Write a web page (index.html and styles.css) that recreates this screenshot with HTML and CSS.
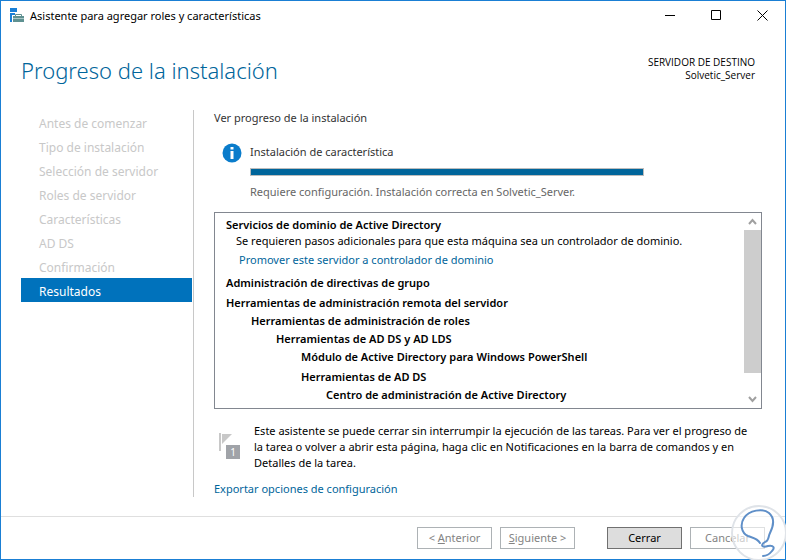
FILE: index.html
```html
<!DOCTYPE html>
<html lang="es">
<head>
<meta charset="utf-8">
<title>Asistente para agregar roles y características</title>
<link rel="stylesheet" href="styles.css">
</head>
<body>
<div class="window">
  <header class="titlebar">
    <svg class="app-icon" width="16" height="16" viewBox="0 0 16 16" aria-hidden="true">
      <path d="M1 0h7v4H1z" fill="#1a7fd6"/>
      <path d="M1 5h5v2H3v7H1z" fill="#1a7fd6"/>
      <path d="M6.500 8V6.500h6V8" fill="none" stroke="#5f9191"/>
      <path d="M4 8h11v2H4zM4 11h11v3H4z" fill="#5f9191"/>
      <path d="M4 10h11v1H4z" fill="#a8c6c6"/>
    </svg>
    <span class="titlebar-text">Asistente para agregar roles y características</span>
    <div class="window-controls">
      <button class="window-button" type="button" aria-label="Minimizar"><svg width="11" height="11" viewBox="0 0 11 11"><path d="M0 5.5h10"/></svg></button>
      <button class="window-button" type="button" aria-label="Maximizar"><svg width="11" height="11" viewBox="0 0 11 11"><path d="M.5.5h9v9h-9z"/></svg></button>
      <button class="window-button" type="button" aria-label="Cerrar ventana"><svg width="11" height="11" viewBox="0 0 11 11"><path d="M.5.5l10 10M10.500.5l-10 10"/></svg></button>
    </div>
  </header>

  <div class="page-header">
    <h1>Progreso de la instalación</h1>
    <p class="destination">SERVIDOR DE DESTINO<br>Solvetic_Server</p>
  </div>

  <div class="page-body">
    <nav class="steps" aria-label="Pasos">
      <ol>
        <li>Antes de comenzar</li>
        <li>Tipo de instalación</li>
        <li>Selección de servidor</li>
        <li>Roles de servidor</li>
        <li>Características</li>
        <li>AD DS</li>
        <li>Confirmación</li>
        <li class="current" aria-current="step">Resultados</li>
      </ol>
    </nav>

    <main class="content">
      <h2>Ver progreso de la instalación</h2>

      <section class="status">
        <svg class="info-icon" width="20" height="20" viewBox="0 0 20 20" aria-hidden="true">
          <circle cx="10" cy="10" r="9.500" fill="#0a7ccb"/>
          <path d="M8.500 4h3v2.500h-3zM8.500 8h3v8h-3z" fill="#fff"/>
        </svg>
        <div class="status-detail">
          <label for="install-progress">Instalación de característica</label>
          <progress id="install-progress" value="100" max="100"></progress>
          <p>Requiere configuración. Instalación correcta en Solvetic_Server.</p>
        </div>
      </section>

      <section class="results">
        <div class="results-list">
          <div class="feature">
            <h3>Servicios de dominio de Active Directory</h3>
            <p>Se requieren pasos adicionales para que esta máquina sea un controlador de dominio.</p>
            <a href="#promover">Promover este servidor a controlador de dominio</a>
          </div>
          <h3>Administración de directivas de grupo</h3>
          <ul class="tree">
            <li>Herramientas de administración remota del servidor
              <ul>
                <li>Herramientas de administración de roles
                  <ul>
                    <li>Herramientas de AD DS y AD LDS
                      <ul>
                        <li>Módulo de Active Directory para Windows PowerShell</li>
                        <li>Herramientas de AD DS
                          <ul>
                            <li>Centro de administración de Active Directory</li>
                          </ul>
                        </li>
                      </ul>
                    </li>
                  </ul>
                </li>
              </ul>
            </li>
          </ul>
        </div>
        <div class="scrollbar" aria-hidden="true">
          <svg width="17" height="17" viewBox="0 0 17 17"><path d="M5 11l3.500-4 3.500 4"/></svg>
          <div class="scroll-track"><div class="scroll-thumb"></div></div>
          <svg width="17" height="17" viewBox="0 0 17 17"><path d="M5 6l3.500 4L12 6"/></svg>
        </div>
      </section>

      <section class="notice">
        <div class="flag">
          <svg width="14" height="20" viewBox="0 0 14 20" aria-hidden="true">
            <path d="M0 0h2v18H0z" fill="#c8c8c8"/><path d="M3 1h10L3 11z" fill="#c8c8c8"/>
          </svg>
          <span class="flag-count">1</span>
        </div>
        <p>Este asistente se puede cerrar sin interrumpir la ejecución de las tareas. Para ver el progreso de la tarea o volver a abrir esta página, haga clic en Notificaciones en la barra de comandos y en Detalles de la tarea.</p>
      </section>

      <a class="export" href="#exportar">Exportar opciones de configuración</a>
    </main>
  </div>

  <footer class="actions">
    <div class="button-pair">
      <button type="button" disabled>&lt; <u>A</u>nterior</button>
      <button type="button" disabled><u>S</u>iguiente &gt;</button>
    </div>
    <div class="button-pair">
      <button class="primary" type="button">Cerrar</button>
      <button type="button" disabled>Cancelar</button>
    </div>
  </footer>

  <svg class="watermark" width="60" height="60" viewBox="0 0 60 60" aria-hidden="true">
    <circle cx="33" cy="33" r="27" fill="#fff" fill-opacity=".6" stroke="#dfe3e8" stroke-width="2"/>
    <path d="M34 43C31 38 27 38 22 36C15 33 14 24 18 18C23 10 37 8 43 13C50 19 47 27 44 33C42 37 43 41 39 42C34 45 36 48 42 46C48 45 49 48 46 51Q42 56 37 56" fill="none" stroke="#5f8fc8" stroke-width="2" stroke-linecap="round" stroke-linejoin="round"/>
  </svg>
</div>
</body>
</html>
```
FILE: styles.css
```css
* {
  box-sizing: border-box;
}

body,
h1,
h2,
h3,
p,
ul,
ol {
  margin: 0;
  padding: 0;
}

body {
  background: #fff;
  color: #000;
  font: 11px/16px "Noto Sans", "Open Sans", sans-serif;
}

ul,
ol {
  list-style: none;
}

button {
  font: inherit;
}

a {
  color: #00659b;
  text-decoration: none;
}

.window {
  position: relative;
  display: flex;
  flex-direction: column;
  min-height: 100vh;
  border: 1px solid #1a7fd4;
}

.titlebar {
  display: flex;
  align-items: center;
  height: 29px;
  padding-left: 8px;
}

.titlebar-text {
  flex: 1;
  padding-left: 5px;
}

.window-controls {
  display: flex;
}

.window-button {
  display: flex;
  align-items: center;
  justify-content: center;
  width: 46px;
  height: 29px;
  padding: 0;
  border: 0;
  background: none;
}

.window-button path {
  fill: none;
  stroke: #000;
}

.page-header {
  display: flex;
  justify-content: space-between;
  padding: 24px 30px 24px 20px;
}

h1 {
  color: #00659b;
  font-size: 22px;
  font-weight: 300;
  line-height: 32px;
}

.destination {
  padding-top: 2px;
  font-family: "Open Sans", sans-serif;
  font-size: 10px;
  line-height: 13px;
  text-align: right;
}

.page-body {
  display: flex;
  flex: 1;
  padding: 0 23px 19px 20px;
}

.steps {
  flex: 0 0 173px;
  border-right: 1px solid #c8c8c8;
}

.steps li {
  margin-right: 1px;
  padding: 4px 0 0 18px;
  color: #c8c8c8;
  font-size: 12px;
  line-height: 20px;
}

.steps .current {
  background: #0072bc;
  color: #fff;
}

.content {
  flex: 1;
  min-width: 0;
  padding-left: 20px;
}

h2 {
  color: #333;
  font-size: 11px;
  font-weight: 400;
}

.status {
  display: flex;
  gap: 8px;
  padding: 17px 0 12px 8px;
}

.status-detail {
  display: flex;
  flex: 1;
  flex-direction: column;
  gap: 8px;
  padding-top: 1px;
  color: #333;
}

.status-detail p {
  color: #666;
}

progress {
  appearance: none;
  width: 77%;
  height: 8px;
  border: 1px solid #bcbcbc;
  background: #e6e6e6;
}

progress::-webkit-progress-bar {
  background: #e6e6e6;
}

progress::-webkit-progress-value {
  background: #00659b;
}

.results {
  display: flex;
  border: 1px solid #828790;
}

.results-list {
  flex: 1;
  padding: 4px 0 5px 11px;
}

.results h3,
.tree {
  font-size: 11px;
  font-weight: 600;
}

.feature {
  padding-bottom: 7px;
}

.feature p {
  padding-left: 10px;
}

.feature a {
  display: block;
  padding: 3px 0 0 13px;
}

.tree {
  padding-top: 4px;
}

.tree ul {
  padding: 2px 0 0 25px;
}

.tree li + li {
  padding-top: 4px;
}

.scrollbar {
  display: flex;
  flex-direction: column;
  width: 17px;
}

.scrollbar path {
  fill: none;
  stroke: #a0a0a0;
  stroke-width: 2;
}

.scroll-track {
  flex: 1;
}

.scroll-thumb {
  height: 89%;
  background: #cdcdcd;
}

.notice {
  display: flex;
  gap: 14px;
  padding: 14px 5px 10px;
}

.flag {
  position: relative;
  flex: 0 0 21px;
  padding-top: 10px;
}

.flag-count {
  position: absolute;
  top: 22px;
  right: 0;
  width: 14px;
  background: #a0a3a8;
  color: #fff;
  font-size: 10px;
  line-height: 14px;
  text-align: center;
}

.export {
  display: block;
}

.actions {
  display: flex;
  justify-content: flex-end;
  gap: 32px;
  padding: 10px 20px;
  border-top: 1px solid #dfdfdf;
}

.button-pair {
  display: flex;
  gap: 8px;
}

.actions button {
  width: 75px;
  height: 22px;
  padding: 0;
  border: 1px solid #adb2b5;
  background: #fff;
  color: #838383;
}

.actions .primary {
  border-color: #707070;
  background: #ddd;
  color: #000;
}

.watermark {
  position: absolute;
  right: -1px;
  bottom: -1px;
}
```
